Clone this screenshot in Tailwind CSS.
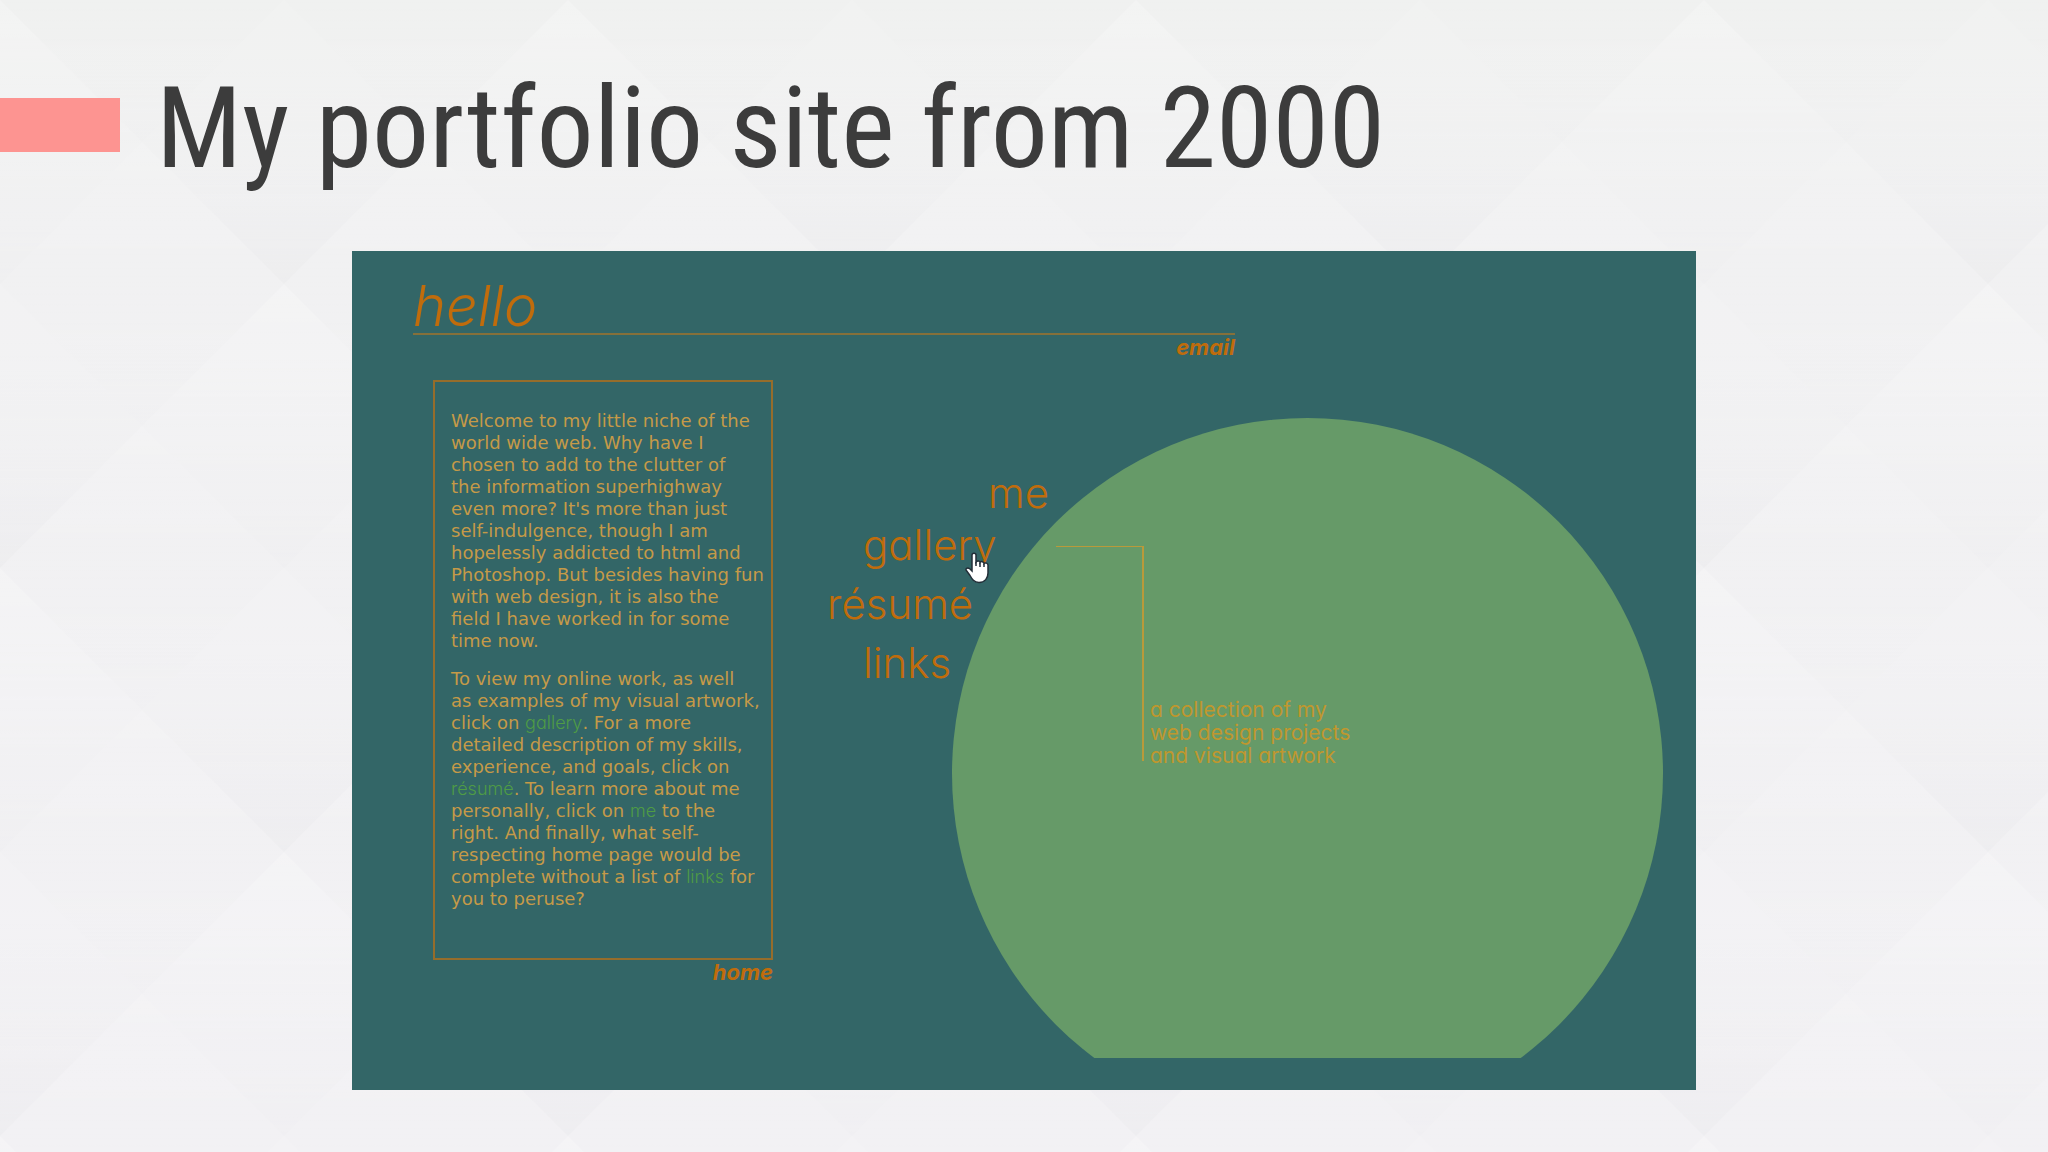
<!DOCTYPE html>
<html lang="en">

<head>
    <meta charset="UTF-8" />
    <meta name="viewport" content="width=device-width, initial-scale=1.0" />
    <title>My portfolio site from 2000</title>
    <script src="https://cdn.jsdelivr.net/npm/@tailwindcss/browser@4"></script>
</head>

<body class="relative min-h-screen overflow-x-hidden bg-[#f2f1f4]">
    <!-- Background diamonds -->
    <svg class="absolute inset-0 -z-10 h-full w-full" aria-hidden="true">
        <defs>
            <linearGradient id="shade" x1="0" y1="0" x2="0" y2="1">
                <stop offset="0" stop-color="#fff" stop-opacity=".4" />
                <stop offset=".5" stop-color="#fff" stop-opacity="0" />
                <stop offset="1" stop-color="#d8d8dc" stop-opacity=".3" />
            </linearGradient>
            <linearGradient id="top" x1="0" y1="0" x2="0" y2="1">
                <stop offset="0" stop-color="#f0f1f0" />
                <stop offset=".2" stop-color="#f1f1f2" />
                <stop offset="1" stop-color="#f2f1f4" />
            </linearGradient>
            <pattern id="diamonds" width="568" height="568" patternUnits="userSpaceOnUse">
                <g fill="url(#shade)">
                    <path d="M0 0L284 284L0 568L-284 284Z" />
                    <path d="M568 0L852 284L568 568L284 284Z" />
                    <path d="M284 -284L568 0L284 284L0 0Z" />
                    <path d="M284 284L568 568L284 852L0 568Z" />
                </g>
                <g fill="url(#shade)" opacity=".4">
                    <path d="M284 0L568 284L284 568L0 284Z" />
                    <path d="M0 -284L284 0L0 284L-284 0Z" />
                    <path d="M568 -284L852 0L568 284L284 0Z" />
                    <path d="M0 284L284 568L0 852L-284 568Z" />
                    <path d="M568 284L852 568L568 852L284 568Z" />
                </g>
            </pattern>
        </defs>
        <rect width="100%" height="100%" fill="url(#top)" />
        <rect width="100%" height="100%" fill="url(#diamonds)" opacity=".5" />
    </svg>

    <!-- Slide title -->
    <header class="flex items-start gap-9 pt-16">
        <div class="mt-[34px] h-[54px] w-[120px] shrink-0 bg-[#fd9491]"></div>
        <h1 class="font-['Roboto_Condensed',Roboto,sans-serif] text-[114px] leading-[128px] text-[#3c3c3c]">My portfolio site from 2000</h1>
    </header>

    <!-- Portfolio page -->
    <main class="mx-auto mt-[59px] w-full max-w-[1344px] bg-[#336667] pt-7 pr-8 pb-8 pl-[61px] font-[Inter,sans-serif] text-[#c06c0c]">
        <div class="flex w-[822px] flex-col">
            <h2 class="border-b-2 border-[#86703a] text-[56px] leading-[54px] font-light italic [font-feature-settings:'cv11']">hello</h2>
            <a href="#" class="self-end text-[22px] leading-6 font-bold italic [font-feature-settings:'cv11']">email</a>
        </div>

        <div class="mt-[21px] flex items-start pl-5">
            <section class="flex w-[340px] shrink-0 flex-col">
                <div class="h-[580px] border-2 border-[#966d2b] pt-7 pl-4 font-['DejaVu_Sans',Verdana,sans-serif] text-[18px] leading-[22px] whitespace-nowrap text-[#c59a48]">
                    <p>
                        Welcome to my little niche of the<br>
                        world wide web. Why have I<br>
                        chosen to add to the clutter of<br>
                        the information superhighway<br>
                        even more? It's more than just<br>
                        self-indulgence, though I am<br>
                        hopelessly addicted to html and<br>
                        Photoshop. But besides having fun<br>
                        with web design, it is also the<br>
                        field I have worked in for some<br>
                        time now.
                    </p>
                    <p class="mt-4">
                        To view my online work, as well<br>
                        as examples of my visual artwork,<br>
                        click on <a href="#" class="font-[Inter,sans-serif] font-light text-[#4f9c45] [font-feature-settings:'cv11']">gallery</a>. For a more<br>
                        detailed description of my skills,<br>
                        experience, and goals, click on<br>
                        <a href="#" class="font-[Inter,sans-serif] font-light text-[#4f9c45] [font-feature-settings:'cv11']">résumé</a>. To learn more about me<br>
                        personally, click on <a href="#" class="font-[Inter,sans-serif] font-light text-[#4f9c45] [font-feature-settings:'cv11']">me</a> to the<br>
                        right. And finally, what self-<br>
                        respecting home page would be<br>
                        complete without a list of <a href="#" class="font-[Inter,sans-serif] font-light text-[#4f9c45] [font-feature-settings:'cv11']">links</a> for<br>
                        you to peruse?
                    </p>
                </div>
                <a href="#" class="self-end text-[22px] leading-6 font-bold italic">home</a>
            </section>

            <nav class="z-10 mt-[90px] ml-[54px] flex w-[222px] shrink-0 flex-col items-start gap-[14px] text-[42px] leading-[45px] font-light [font-feature-settings:'cv11']">
                <a href="#" class="self-end">me</a>
                <a href="#" class="relative -mt-[7px] ml-9">gallery
                    <svg class="absolute top-[30px] left-[102px] h-8 w-6" viewBox="0 0 24 32" aria-hidden="true">
                        <path d="M7 3C7 .5 11 .5 11 3V10C12 8.500 15 8.500 15 10.500C16 9 19 9.500 19 11.500C20 10.500 23 11 23 13V21C23 26 20 30.500 14 30.500C9 30.500 7 27 5 23.500L1 18C.5 16 3 15.500 5 17L7 19Z" fill="#fff" stroke="#222e38" stroke-width="1.500" />
                        <path d="M11 10V14M15 11V15M19 12V15" fill="none" stroke="#222e38" stroke-width="1.500" />
                    </svg>
                </a>
                <a href="#">résumé</a>
                <a href="#" class="ml-9">links</a>
            </nav>

            <div class="relative mt-[38px] -ml-[97px] h-[640px] w-[711px] shrink-0 overflow-hidden">
                <div class="absolute top-0 left-0 size-[711px] rounded-full bg-[#669a68]"></div>
                <div class="relative flex items-start pt-32 pl-[104px]">
                    <div class="h-[215px] w-[88px] border-t border-r-2 border-[#b99a3a]"></div>
                    <p class="mt-[152px] pl-[6px] text-[21px] leading-[23px] whitespace-nowrap text-[#c0972e] [font-feature-settings:'cv11']">
                        a collection of my<br>
                        web design projects<br>
                        and visual artwork
                    </p>
                </div>
            </div>
        </div>
    </main>
</body>

</html>
